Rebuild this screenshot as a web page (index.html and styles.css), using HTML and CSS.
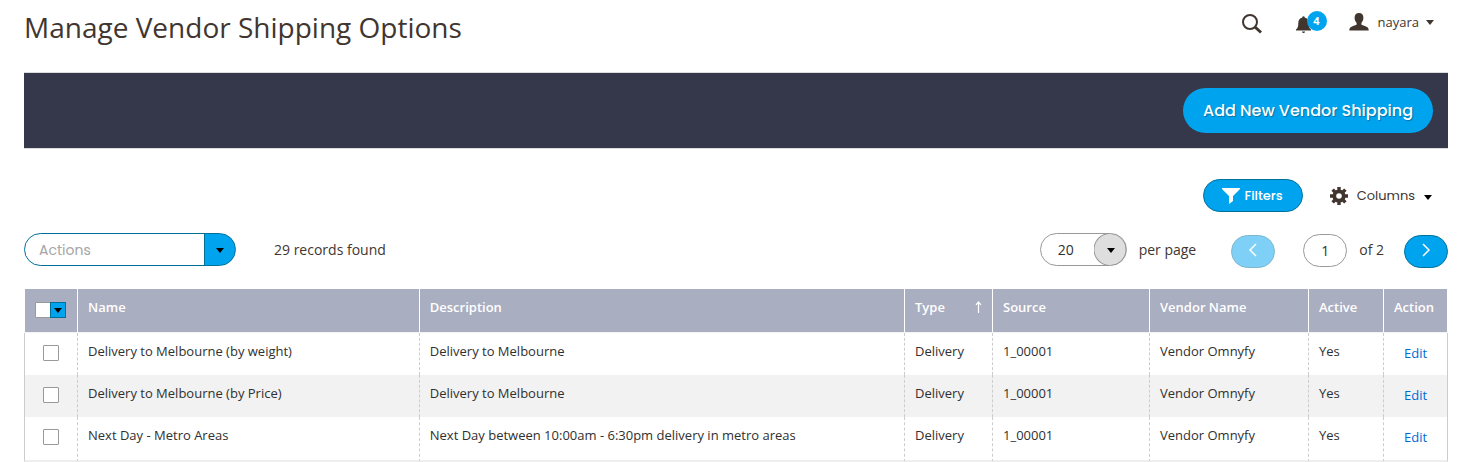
FILE: index.html
```html
<!DOCTYPE html>
<html lang="en">
<head>
    <meta charset="UTF-8">
    <meta name="viewport" content="width=device-width, initial-scale=1.0">
    <title>Manage Vendor Shipping Options</title>
    <link rel="stylesheet" href="styles.css">
</head>
<body>
    <div class="page-wrapper">
        <header class="page-header">
            <h1>Manage Vendor Shipping Options</h1>
            <div class="header-tools">
                <button type="button" class="icon-button search" aria-label="Search">
                    <svg width="22" height="22" viewBox="0 0 22 22"><circle cx="9" cy="9" r="7" fill="none" stroke="currentColor" stroke-width="2"/><path d="M14 14l6 5.500" stroke="currentColor" stroke-width="3"/></svg>
                </button>
                <button type="button" class="icon-button notifications" aria-label="Notifications">
                    <svg width="15" height="18" viewBox="0 0 15 18" fill="currentColor"><path d="M6.300 1.500a1.200 1.200 0 0 1 2.400 0c2.700.6 4 2.800 4 5.500 0 3.500.5 5.200 2.300 6.500v1H0v-1C1.800 12.200 2.300 10.500 2.300 7c0-2.700 1.300-4.900 4-5.500zM6 15.500h3a1.500 1.500 0 0 1-3 0z"/></svg>
                    <span class="badge">4</span>
                </button>
                <button type="button" class="icon-button account">
                    <svg width="20" height="18" viewBox="0 0 20 18" fill="currentColor"><path d="M10 0c2.900 0 4.400 1.900 4.400 4.800 0 2-.8 4-2 5.100v1.600c.4.700 2.300 1 4.100 1.700 2.300.8 3.200 1.700 3.200 4.300H.3c0-2.600.9-3.500 3.200-4.300 1.800-.7 3.700-1 4.100-1.700V9.900c-1.200-1.100-2-3.100-2-5.100C5.600 1.900 7.100 0 10 0z"/></svg>
                    <span>nayara</span>
                    <i class="caret"></i>
                </button>
            </div>
        </header>

        <div class="page-actions">
            <button type="button" class="primary">Add New Vendor Shipping</button>
        </div>

        <div class="grid-tools">
            <button type="button" class="filters">
                <svg width="18" height="16" viewBox="0 0 18 16" fill="currentColor"><path d="M0 0h18v1l-7 7v5l-4 3V8L0 1z"/></svg>
                <span>Filters</span>
            </button>
            <button type="button" class="columns">
                <svg width="18" height="18" viewBox="0 0 18 18"><circle cx="9" cy="9" r="4.700" fill="none" stroke="currentColor" stroke-width="3.800"/><path d="M9 0v3M9 15v3M0 9h3M15 9h3M2.600 2.600l2.200 2.200M13.200 13.200l2.200 2.200M2.600 15.400l2.200-2.200M13.200 4.800l2.200-2.200" stroke="currentColor" stroke-width="3.400"/></svg>
                <span>Columns</span>
                <i class="caret"></i>
            </button>
        </div>

        <div class="grid-controls">
            <div class="select-wrap">
                <select class="mass-actions" aria-label="Actions">
                    <option>Actions</option>
                </select>
                <i class="caret"></i>
            </div>
            <span class="records">29 records found</span>
            <div class="pager">
                <div class="select-wrap">
                    <select class="page-size" id="page-size">
                        <option>20</option>
                    </select>
                    <i class="caret"></i>
                </div>
                <label class="per-page" for="page-size">per page</label>
                <button type="button" class="page-button" aria-label="Previous page" disabled>
                    <svg width="8" height="14" viewBox="0 0 8 14"><path d="M7 1L1 7l6 6" fill="none" stroke="currentColor" stroke-width="1.500"/></svg>
                </button>
                <input type="text" class="page-current" id="page-current" value="1">
                <label class="page-total" for="page-current">of 2</label>
                <button type="button" class="page-button" aria-label="Next page">
                    <svg width="8" height="14" viewBox="0 0 8 14"><path d="M1 1l6 6-6 6" fill="none" stroke="currentColor" stroke-width="1.500"/></svg>
                </button>
            </div>
        </div>

        <table class="data-grid">
            <colgroup>
                <col class="col-check">
                <col class="col-name">
                <col>
                <col class="col-type">
                <col class="col-source">
                <col class="col-vendor">
                <col class="col-active">
                <col class="col-action">
            </colgroup>
            <thead>
                <tr>
                    <th class="check-cell">
                        <div class="multicheck">
                            <input type="checkbox" aria-label="Select all">
                            <button type="button" aria-label="Selection options"><i class="caret"></i></button>
                        </div>
                    </th>
                    <th>Name</th>
                    <th>Description</th>
                    <th>
                        <div class="sorted">
                            <span>Type</span>
                            <svg width="7" height="12" viewBox="0 0 7 12"><path d="M3.500 12V1M1 3.800L3.500 1 6 3.800" fill="none" stroke="currentColor" stroke-width="1.200"/></svg>
                        </div>
                    </th>
                    <th>Source</th>
                    <th>Vendor Name</th>
                    <th>Active</th>
                    <th>Action</th>
                </tr>
            </thead>
            <tbody>
                <tr>
                    <td class="check-cell"><input type="checkbox" aria-label="Select row"></td>
                    <td>Delivery to Melbourne (by weight)</td>
                    <td>Delivery to Melbourne</td>
                    <td>Delivery</td>
                    <td>1_00001</td>
                    <td>Vendor Omnyfy</td>
                    <td>Yes</td>
                    <td class="action-cell"><a href="#">Edit</a></td>
                </tr>
                <tr>
                    <td class="check-cell"><input type="checkbox" aria-label="Select row"></td>
                    <td>Delivery to Melbourne (by Price)</td>
                    <td>Delivery to Melbourne</td>
                    <td>Delivery</td>
                    <td>1_00001</td>
                    <td>Vendor Omnyfy</td>
                    <td>Yes</td>
                    <td class="action-cell"><a href="#">Edit</a></td>
                </tr>
                <tr>
                    <td class="check-cell"><input type="checkbox" aria-label="Select row"></td>
                    <td>Next Day - Metro Areas</td>
                    <td>Next Day between 10:00am - 6:30pm delivery in metro areas</td>
                    <td>Delivery</td>
                    <td>1_00001</td>
                    <td>Vendor Omnyfy</td>
                    <td>Yes</td>
                    <td class="action-cell"><a href="#">Edit</a></td>
                </tr>
            </tbody>
        </table>
    </div>
</body>
</html>
```
FILE: styles.css
```css
* {
    box-sizing: border-box;
}
body {
    margin: 0;
    background-color: #fff;
    color: #41362f;
    font-family: "Open Sans", Arial, sans-serif;
    font-size: 14px;
}
button, input, select {
    font-family: inherit;
    color: inherit;
    margin: 0;
    padding: 0;
}
button {
    border: none;
    background: none;
    cursor: pointer;
}
svg {
    display: block;
    flex-shrink: 0;
}
.page-wrapper {
    padding: 0 11px 0 24px;
}
.caret {
    border: 4px solid transparent;
    border-top: 5px solid currentColor;
    border-bottom: none;
}

/* header */
.page-header {
    display: flex;
    justify-content: space-between;
    align-items: flex-start;
    height: 72px;
}
h1 {
    margin: 7px 0 0;
    font-size: 28px;
    font-weight: 400;
    line-height: 40px;
}
.header-tools {
    display: flex;
    align-items: center;
    height: 44px;
    padding-right: 14px;
}
.icon-button {
    display: flex;
    align-items: center;
    font-size: 13px;
}
.search {
    margin-top: 4px;
    margin-right: 33px;
}
.notifications {
    position: relative;
    margin-top: 6px;
    margin-right: 38px;
}
.badge {
    position: absolute;
    left: 11px;
    top: -5px;
    width: 20px;
    border-radius: 50%;
    background-color: #00a3ee;
    color: #fff;
    font-size: 11px;
    font-weight: 700;
    line-height: 20px;
    text-align: center;
}
.account span {
    margin: 0 7px 0 9px;
}

/* top bar */
.page-actions {
    display: flex;
    justify-content: flex-end;
    padding: 15px;
    border: 1px solid #ddd;
    border-width: 1px 0;
    background-color: #35374a;
}
.primary {
    height: 45px;
    padding: 0 20px;
    border-radius: 23px;
    background-color: #00a3ee;
    color: #fff;
    font-family: Poppins, Inter, sans-serif;
    font-size: 16px;
    font-weight: 500;
    text-shadow: 1px 1px 1px rgba(0, 0, 0, 0.3);
}

/* filters and columns */
.grid-tools {
    display: flex;
    justify-content: flex-end;
    gap: 27px;
    margin-top: 30px;
    padding-right: 16px;
    font-family: Poppins, Inter, sans-serif;
}
.filters, .columns {
    display: flex;
    align-items: center;
    height: 33px;
    font-family: inherit;
    font-size: 13px;
}
.filters {
    justify-content: center;
    gap: 4px;
    width: 100px;
    border: 1px solid #007099;
    border-radius: 17px;
    background-color: #00a3ee;
    color: #fff;
    font-weight: 500;
}
.columns span {
    margin: 0 9px;
}
.columns .caret {
    margin-top: 3px;
    color: #000;
}

/* mass actions and paging */
.grid-controls {
    display: flex;
    align-items: center;
    height: 35px;
    margin: 20px 0 22px;
}
.select-wrap {
    position: relative;
    display: flex;
}
.select-wrap .caret {
    position: absolute;
    top: 15px;
    right: 12px;
    color: #000;
    pointer-events: none;
}
.mass-actions, .page-size {
    height: 33px;
    border-radius: 17px;
    appearance: none;
    font-size: 14px;
}
.mass-actions {
    width: 212px;
    padding-left: 14px;
    border: 1px solid #007099;
    background: linear-gradient(to right, #007099 1px, #00a3ee 1px) right / 31px 100% no-repeat #fff;
    color: #a6a6a6;
    font-family: Poppins, Inter, sans-serif;
}
.page-size {
    width: 87px;
    padding-left: 17px;
    border: 1px solid #999;
    background: radial-gradient(circle, #dedede 15px, #999 16px, transparent 17px) right / 32px 100% no-repeat #fff;
    color: #303030;
}
.records {
    margin-left: 38px;
}
.pager {
    display: flex;
    align-items: center;
    margin-left: auto;
}
.per-page {
    margin: 0 35px 0 12px;
}
.page-button {
    display: flex;
    align-items: center;
    justify-content: center;
    width: 44px;
    height: 33px;
    margin-top: 4px;
    padding-bottom: 3px;
    border: 1px solid #007099;
    border-radius: 17px;
    background-color: #00a3ee;
    color: #fff;
}
.page-button:disabled {
    opacity: 0.5;
}
.page-current {
    width: 44px;
    height: 33px;
    margin-top: 2px;
    margin-left: 28px;
    border: 1px solid #999;
    border-radius: 17px;
    color: #303030;
    font-size: 14px;
    text-align: center;
}
.page-total {
    margin: 0 20px 0 12px;
}

/* grid */
.data-grid {
    width: 100%;
    border-collapse: separate;
    border-spacing: 0;
    table-layout: fixed;
    color: #303030;
    font-size: 13px;
    line-height: 18px;
}
.col-check {
    width: 54px;
}
.col-name {
    width: 24%;
}
.col-type {
    width: 88px;
}
.col-source {
    width: 157px;
}
.col-vendor {
    width: 159px;
}
.col-active {
    width: 75px;
}
.col-action {
    width: 64px;
}
.data-grid th {
    height: 44px;
    padding: 9px 10px;
    border-right: 1px solid #fff;
    border-bottom: 1px solid #f2f2f2;
    background-color: #aaaec1;
    color: #fff;
    font-weight: 600;
    text-align: left;
    vertical-align: top;
}
.data-grid td {
    height: 42px;
    padding: 9px 10px;
    border-right: 1px dashed #ccc;
    vertical-align: top;
}
.data-grid th:first-child {
    border-left: 1px solid #fff;
}
.data-grid td:first-child {
    border-left: 1px solid #ccc;
}
.data-grid td:last-child {
    border-right-style: solid;
}
.data-grid tbody tr:nth-child(even) {
    background-color: #f2f2f2;
}
.data-grid tbody tr:last-child td {
    height: 45px;
    border-bottom: 2px solid #eee;
}
.data-grid .check-cell {
    padding: 12px 0 0 10px;
}
.data-grid th.check-cell {
    padding-top: 13px;
}
.data-grid td.check-cell {
    padding-left: 18px;
}
.data-grid input {
    display: block;
    width: 16px;
    height: 16px;
    border: 1px solid #999;
    border-radius: 1px;
    appearance: none;
    background-color: #fff;
}
.multicheck {
    display: flex;
}
.multicheck button {
    display: flex;
    align-items: center;
    justify-content: center;
    width: 16px;
    height: 16px;
    margin-left: -1px;
    border: 1px solid #007099;
    background-color: #00a3ee;
    color: #000;
}
.sorted {
    display: flex;
    align-items: center;
    justify-content: space-between;
}
.data-grid .action-cell {
    padding: 11px 0 0 20px;
}
.data-grid a {
    color: #006bd6;
    text-decoration: none;
}
.data-grid a:hover {
    text-decoration: underline;
}
```
